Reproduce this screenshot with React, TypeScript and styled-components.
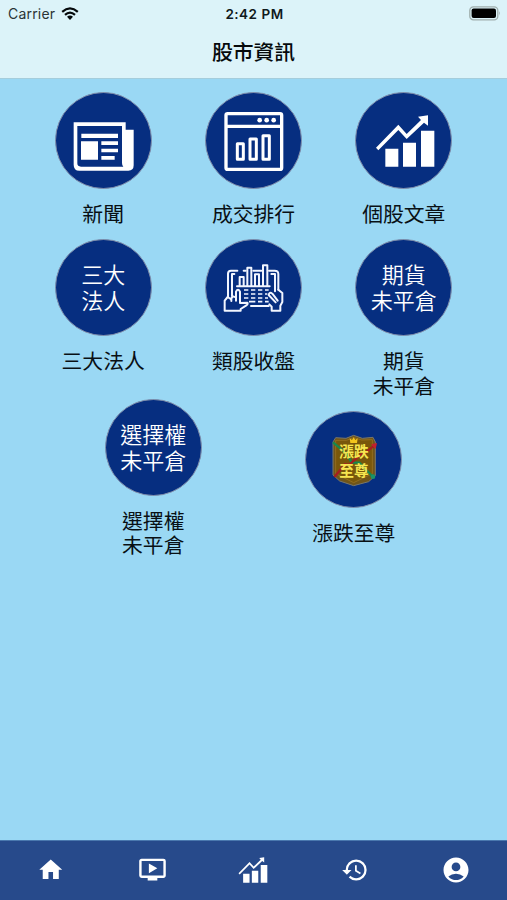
import React from "react";
import styled, { createGlobalStyle } from "styled-components";
import { MdHome, MdOndemandVideo, MdHistory, MdAccountCircle } from "react-icons/md";

const cjk = `"Noto Sans CJK TC", sans-serif`;

const GlobalStyle = createGlobalStyle`
  * { box-sizing: border-box; }
  body { margin: 0; background: #9ad8f4; font-family: ${cjk}; }
`;

const Screen = styled.div`
  width: 100%;
  height: 900px;
  display: flex;
  flex-direction: column;
  overflow: hidden;
  background: #9ad8f4;
`;

const Header = styled.header`
  height: 79px;
  flex: none;
  background: #dcf3f9;
  border-bottom: 1px solid #a5cddc;
`;

const StatusBar = styled.div`
  height: 27px;
  padding: 0 6px 0 8px;
  display: grid;
  grid-template-columns: 1fr auto 1fr;
  align-items: center;
  font-family: Inter, sans-serif;
  font-size: 14px;
  color: #10191c;
`;

const Carrier = styled.div`
  display: flex;
  align-items: center;
  gap: 6px;
  color: #2b3336;
  letter-spacing: 0.2px;
`;

const Clock = styled.div`
  font-weight: 600;
  font-size: 13.5px;
  letter-spacing: 0.5px;
`;

const BatterySlot = styled.div`
  display: flex;
  justify-content: flex-end;
`;

const Title = styled.h1`
  margin: 0;
  height: 50px;
  line-height: 49px;
  text-align: center;
  font-size: 20.8px;
  font-weight: 500;
  color: #05090b;
`;

const Content = styled.main`
  flex: 1;
  padding-top: 13.5px;
`;

const Row = styled.div<{ $columns: number; $width: number; $height: number; $center?: boolean }>`
  display: grid;
  grid-template-columns: repeat(${(p) => p.$columns}, 1fr);
  width: ${(p) => p.$width}px;
  height: ${(p) => p.$height}px;
  margin: 0 auto;
  align-items: ${(p) => (p.$center ? "center" : "start")};
`;

const Item = styled.div`
  display: flex;
  flex-direction: column;
  align-items: center;
`;

const Disc = styled.div`
  width: 97px;
  height: 97px;
  margin-top: -0.5px;
  border-radius: 50%;
  border: 1px solid #8290ac;
  background: #062e80;
  color: #fff;
  display: flex;
  align-items: center;
  justify-content: center;
  font-size: 22px;
  line-height: 26px;
  font-weight: 350;

  & > svg {
    flex: none;
    width: 96px;
    height: 96px;
  }
`;

const DiscText = styled.div`
  padding-bottom: 3px;
  text-align: center;
  white-space: pre-line;
`;

const Label = styled.div`
  margin-top: 12px;
  font-size: 20.8px;
  line-height: 24.5px;
  text-align: center;
  white-space: pre-line;
  color: #091014;
`;

const TabBar = styled.nav`
  height: 60px;
  flex: none;
  display: grid;
  grid-template-columns: repeat(5, 1fr);
  background: #274a8b;
  border-top: 1px solid #4a78ae;
`;

const Tab = styled.div`
  display: flex;
  align-items: center;
  justify-content: center;
  padding-bottom: 2px;
  color: #fff;
`;

const view = "31 22 288 288";

const WifiIcon = () => (
  <svg width="18" height="14" viewBox="0 0 18 14" fill="none" stroke="#05090b" strokeWidth="2.2">
    <path d="M1.2 4.8 Q9 -1.9 16.8 4.8" />
    <path d="M4 7.8 Q9 3.4 14 7.8" />
    <path d="M6 9.8 Q9 7.4 12 9.8 L9 13Z" fill="#05090b" stroke="none" />
  </svg>
);

const BatteryIcon = () => (
  <svg width="32" height="15" viewBox="0 0 32 15">
    <rect x="0.8" y="0.8" width="28" height="13" rx="3.6" fill="#dcf3f9" stroke="#9faead" strokeWidth="1.3" />
    <rect x="2.6" y="2.6" width="24.4" height="9.4" rx="2" fill="#000" />
    <path d="M30.2 5 Q32 7.3 30.2 9.6Z" fill="#9faead" />
  </svg>
);

const NewsIcon = () => (
  <svg viewBox={view} fill="#fff">
    <path
      fillRule="evenodd"
      d="M87 110H243V132H267V239Q267 255 251 255H104Q87 255 87 237ZM98 121V233Q98 243 109 243H236Q232 240 232 232V121Z"
    />
    <path d="M110 144H220V157H110ZM109 167H160V222H109ZM170 167H220V178H170ZM170 189H220V200H170ZM170 211H210V222H170Z" />
  </svg>
);

const RankingIcon = () => (
  <svg viewBox={view} fill="none" stroke="#fff" strokeWidth="10">
    <rect x="94" y="84" width="167" height="167" rx="5" />
    <path d="M94 122H261" />
    <g strokeWidth="9" strokeLinejoin="round">
      <rect x="128" y="174" width="18" height="47" />
      <rect x="166" y="160" width="19" height="61" />
      <rect x="205" y="150" width="19" height="71" />
    </g>
    <g fill="#fff" stroke="none">
      <circle cx="195" cy="103.5" r="7" />
      <circle cx="216" cy="103.5" r="7" />
      <circle cx="237" cy="103.5" r="7" />
    </g>
  </svg>
);

const GrowthShape = () => (
  <>
    <path d="M119 189H158V243H119ZM172 171H211V243H172ZM226 135H266V243H226Z" />
    <path d="M91 186L158 117L183 145L226 103L217 93L247 89V120L235 111L183 160L158 133L98 194Z" />
  </>
);

const GrowthIcon = () => (
  <svg viewBox={view} fill="#fff">
    <GrowthShape />
  </svg>
);

const GrowthTabIcon = () => (
  <svg width="30" height="26" viewBox="90 87 178 158" fill="#fff">
    <GrowthShape />
  </svg>
);

const TabletIcon = () => (
  <svg viewBox={view} fill="none" stroke="#f2f6ff" strokeWidth="6" strokeLinejoin="round" strokeLinecap="round">
    <path d="M127 161H225" />
    <path d="M135 160V133H147V160M158 160V105H170V160M181 160V125H193V160M205 160V98H218V160" />
    <path d="M128 114H109Q100 114 100 123V192M119 124H112V190M147 114H153M176 114H200M223 114H240Q251 114 251 124V171M230 124H241V176" />
    <path d="M90 234V204L99 193L108 199L115 191L124 194V177Q130 166 136 177V211L158 210Q161 214 155 218L138 229V234Z" />
    <path d="M110 199V205M124 194V204" />
    <path d="M251 171L263 181V208L257 219V234H231V222L224 215M222 187Q224 176 233 183L249 204M222 187L243 209" />
    <path
      d="M148 172H161M169 172H182M190 172H203M211 172H222M148 184H161M169 184H182M190 184H203M211 184H218M148 196H161M169 196H182M190 196H203M211 196H220M163 207H182M190 207H203M211 207H222"
      strokeWidth="5"
      strokeLinecap="butt"
    />
    <path d="M169 220H222" />
  </svg>
);

const ShieldIcon = () => (
  <svg viewBox={view}>
    <path
      d="M174 92L200 101L232 98L239 112V213L219 231L174 243L132 229L112 211V112L120 99L151 101Z"
      fill="#705519"
      stroke="#77766c"
      strokeWidth="3"
    />
    <path
      d="M174 99L198 106L230 105V207L174 234L120 207V107L152 107Z"
      fill="#79570b"
      stroke="#a17a25"
      strokeWidth="2"
    />
    <path d="M112 113L153 147L168 174L191 174L210 194L232 217" fill="none" stroke="#16884d" strokeWidth="7" />
    <path d="M116 217L148 179L160 181L193 151L207 146L240 119" fill="none" stroke="#a51e20" strokeWidth="7" />
    <path d="M226 119L244 115L240 133Z" fill="#c3202d" />
    <circle cx="232" cy="216" r="7" fill="#189369" />
    <path d="M162 101L169 106L174 98L179 106L186 101L184 115H164Z" fill="#f4c51c" />
    <text
      fill="#f7e650"
      fontFamily='"Noto Sans CJK TC", sans-serif'
      fontWeight="700"
      fontSize="44"
      textAnchor="middle"
    >
      <tspan x="175" y="158">漲跌</tspan>
      <tspan x="175" y="214">至尊</tspan>
    </text>
  </svg>
);

type Entry = { label: string; art: React.ReactNode };

const rows: { columns: number; width: number; height: number; center?: boolean; items: Entry[] }[] = [
  {
    columns: 3,
    width: 451,
    height: 147,
    items: [
      { label: "新聞", art: <NewsIcon /> },
      { label: "成交排行", art: <RankingIcon /> },
      { label: "個股文章", art: <GrowthIcon /> },
    ],
  },
  {
    columns: 3,
    width: 451,
    height: 159,
    items: [
      { label: "三大法人", art: <DiscText>{"三大\n法人"}</DiscText> },
      { label: "類股收盤", art: <TabletIcon /> },
      { label: "期貨\n未平倉", art: <DiscText>{"期貨\n未平倉"}</DiscText> },
    ],
  },
  {
    columns: 2,
    width: 401,
    height: 159,
    center: true,
    items: [
      { label: "選擇權\n未平倉", art: <DiscText>{"選擇權\n未平倉"}</DiscText> },
      { label: "漲跌至尊", art: <ShieldIcon /> },
    ],
  },
];

const tabs = [
  <MdHome size={27.5} />,
  <MdOndemandVideo size={29} />,
  <GrowthTabIcon />,
  <MdHistory size={28} />,
  <MdAccountCircle size={30} />,
];

export default function App() {
  return (
    <Screen>
      <GlobalStyle />
      <Header>
        <StatusBar>
          <Carrier>
            Carrier
            <WifiIcon />
          </Carrier>
          <Clock>2:42 PM</Clock>
          <BatterySlot>
            <BatteryIcon />
          </BatterySlot>
        </StatusBar>
        <Title>股市資訊</Title>
      </Header>
      <Content>
        {rows.map((row, i) => (
          <Row key={i} $columns={row.columns} $width={row.width} $height={row.height} $center={row.center}>
            {row.items.map((item) => (
              <Item key={item.label}>
                <Disc>{item.art}</Disc>
                <Label>{item.label}</Label>
              </Item>
            ))}
          </Row>
        ))}
      </Content>
      <TabBar>
        {tabs.map((icon, i) => (
          <Tab key={i}>{icon}</Tab>
        ))}
      </TabBar>
    </Screen>
  );
}
